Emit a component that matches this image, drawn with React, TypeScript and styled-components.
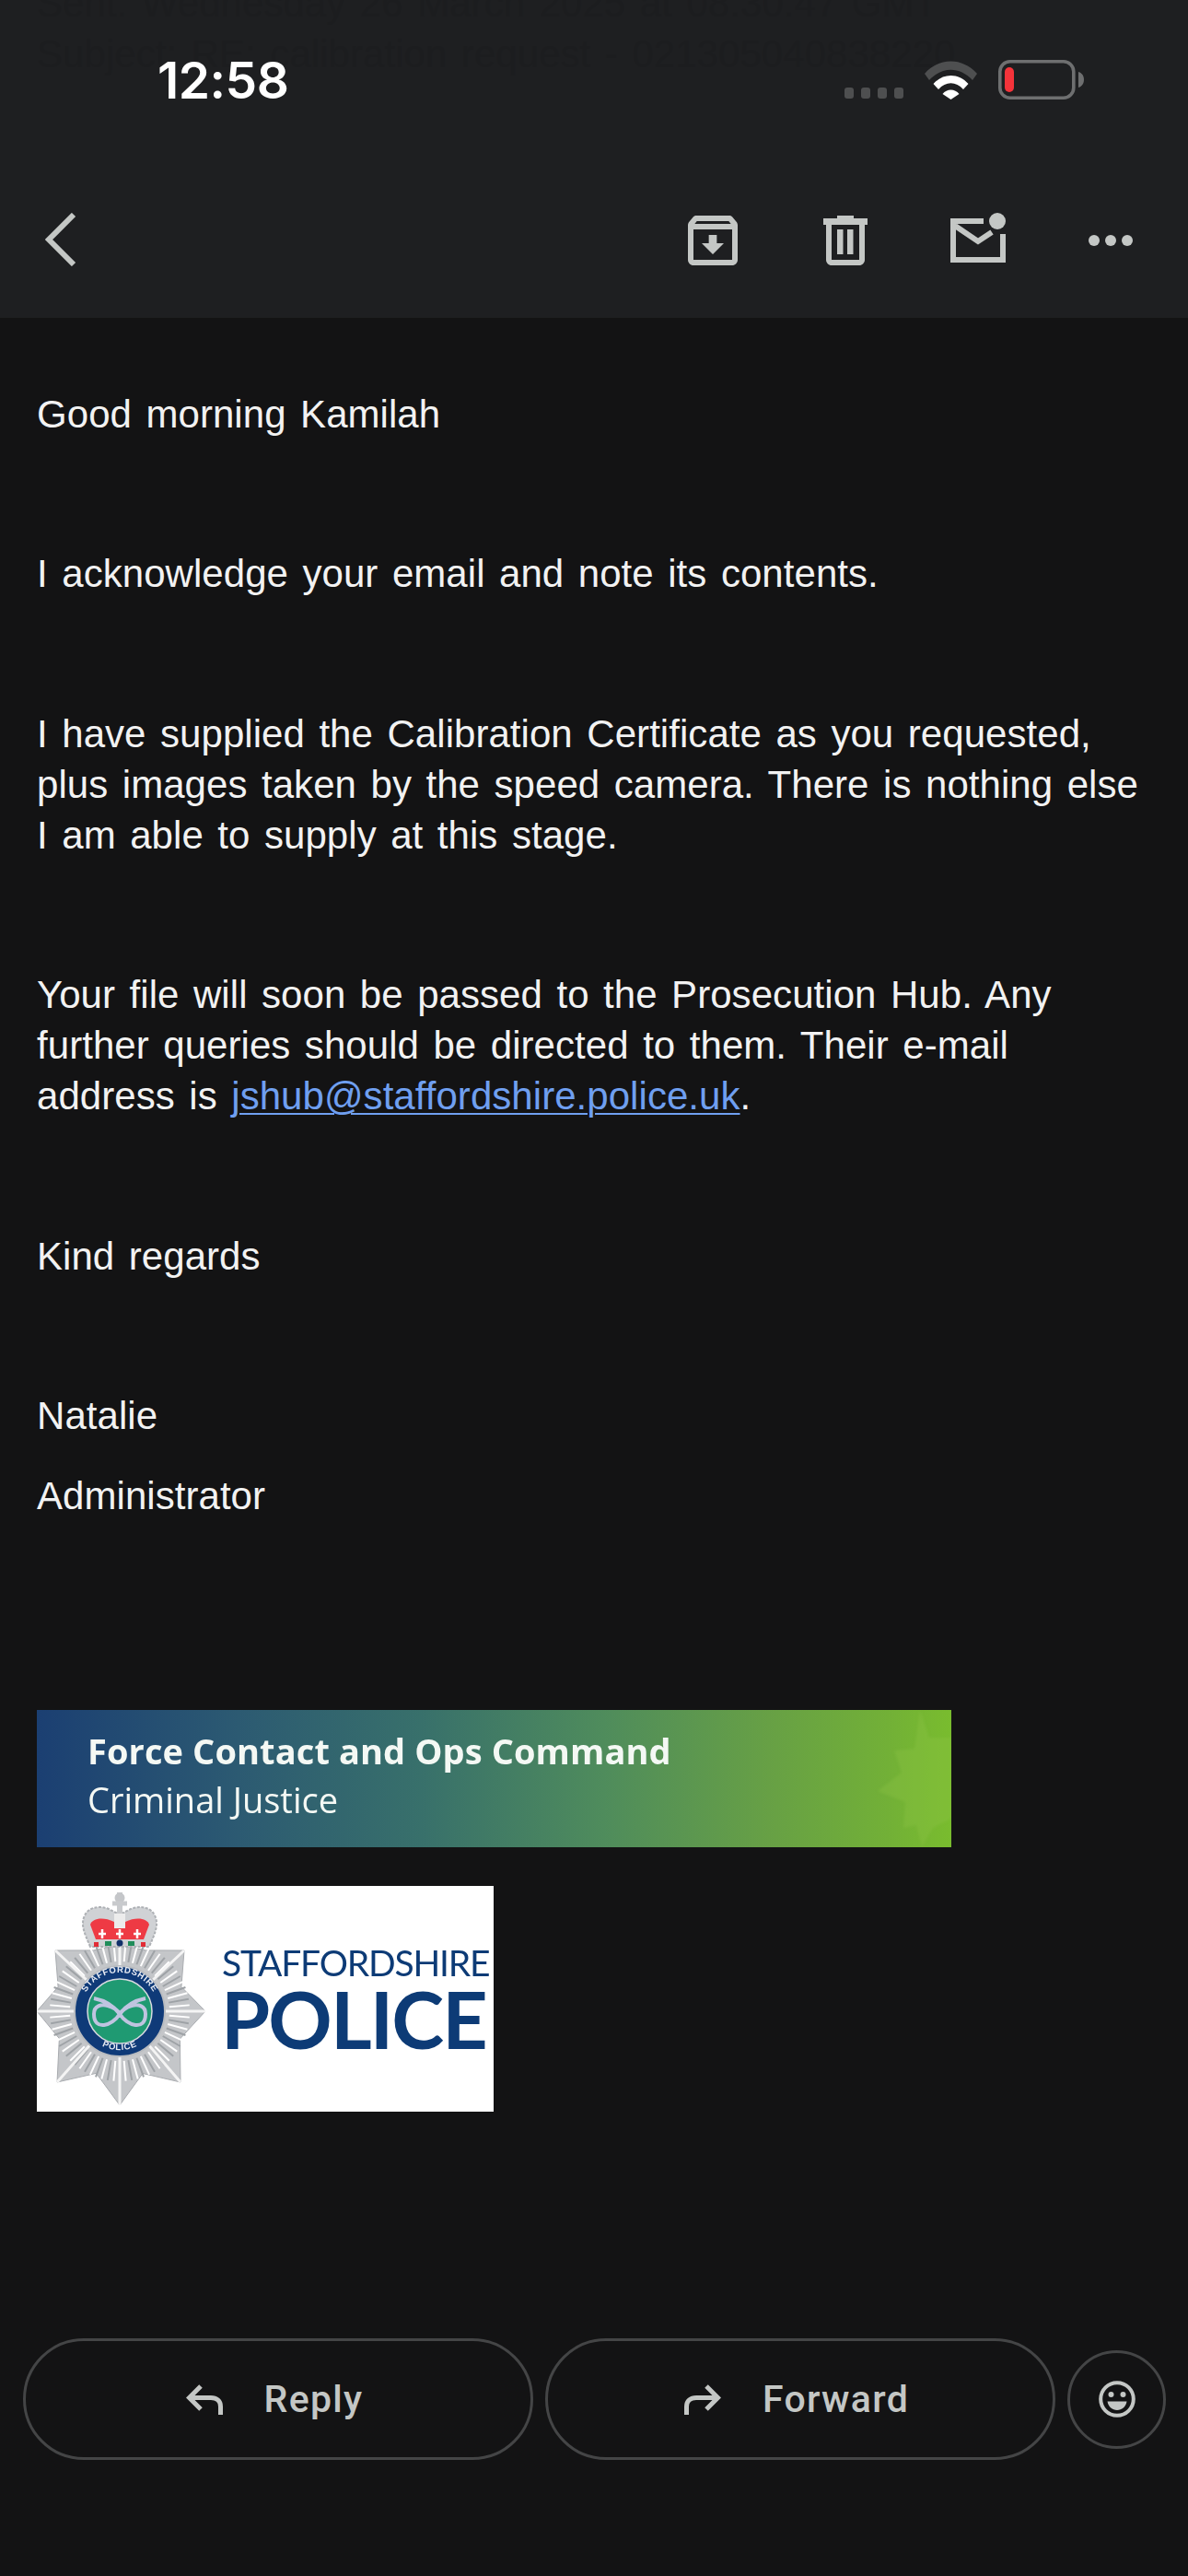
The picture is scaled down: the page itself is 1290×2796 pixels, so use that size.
import React from "react";
import styled, { createGlobalStyle } from "styled-components";

const Global = createGlobalStyle`
  html, body { margin: 0; padding: 0; background: #131314; }
`;

const ICON = "#c4c7c5";

const Page = styled.div`
  width: 1290px;
  height: 2796px;
  background: #131314;
  display: flex;
  flex-direction: column;
  overflow: hidden;
  font-family: "Liberation Sans", Arial, sans-serif;
`;

const Header = styled.header`
  position: relative;
  height: 345px;
  flex: none;
  background: #1e1f21;
  overflow: hidden;
  display: flex;
  flex-direction: column;
`;

const GhostText = styled.div`
  position: absolute;
  left: 40px;
  top: -24px;
  font-size: 42px;
  line-height: 55px;
  word-spacing: 3.8px;
  letter-spacing: 0.05px;
  color: #1c1d1f;
  white-space: nowrap;
`;

const StatusBar = styled.div`
  position: relative;
  display: flex;
  align-items: flex-end;
  height: 108px;
  padding: 0 113px 0 171px;
`;

const Time = styled.div`
  font-family: Inter, "Liberation Sans", sans-serif;
  font-size: 55px;
  line-height: 39px;
  font-weight: 600;
  color: #fff;
  letter-spacing: -0.5px;
  margin-bottom: 1px;
`;

const StatusIcons = styled.div`
  margin-left: auto;
  display: flex;
  align-items: flex-end;
`;

const SignalDots = styled.div`
  display: flex;
  gap: 7.5px;
  margin-right: 23px;
  margin-bottom: 1px;
`;

const SignalDot = styled.span`
  width: 10.5px;
  height: 12px;
  border-radius: 3px;
  background: #4e4f50;
`;

const WifiIcon = styled.svg`
  width: 57px;
  height: 42px;
  margin-right: 23px;
  display: block;
`;

const Battery = styled.svg`
  width: 93px;
  height: 43px;
  display: block;
`;

const Toolbar = styled.div`
  position: relative;
  flex: 1;
  display: flex;
  align-items: flex-start;
  padding: 123px 60px 0 49px;
`;

const BackIcon = styled.svg`
  width: 34px;
  height: 58px;
  margin-right: auto;
  display: block;
`;

const ActionIcons = styled.div`
  display: flex;
  align-items: flex-start;
`;

const ArchiveIcon = styled.svg`
  width: 54px;
  height: 54px;
  margin-top: 3px;
  margin-right: 93px;
  display: block;
`;

const TrashIcon = styled.svg`
  width: 48px;
  height: 54px;
  margin-top: 3px;
  margin-right: 90px;
  display: block;
`;

const MailIcon = styled.svg`
  width: 60px;
  height: 54px;
  margin-right: 90px;
  display: block;
`;

const MoreIcon = styled.svg`
  width: 48px;
  height: 12px;
  margin-top: 24px;
  display: block;
`;

const Body = styled.main`
  flex: 1;
  display: flex;
  flex-direction: column;
  padding: 77px 0 0 40px;
`;

const Para = styled.p<{ $after?: number }>`
  margin: 0 0 ${(p) => p.$after ?? 118.4}px;
  font-size: 42px;
  line-height: 55px;
  word-spacing: 3.8px;
  letter-spacing: 0.05px;
  color: #f2f2f2;
  white-space: nowrap;
`;

const MailLink = styled.a`
  color: #6f9ff0;
  text-decoration: underline;
  text-underline-offset: 4px;
  text-decoration-thickness: 2px;
`;

const Banner = styled.div`
  position: relative;
  width: 993px;
  height: 149px;
  margin-top: 87px;
  box-sizing: border-box;
  padding: 20px 0 0 55px;
  overflow: hidden;
  background: linear-gradient(90deg, #1b3f72 0%, #2c5a72 22%, #38706b 42%, #4f8c5c 62%, #67a045 80%, #72b037 93%, #79bc2e 100%);
  font-family: "Open Sans", sans-serif;
  color: #f4f8f4;
`;

const BannerTitle = styled.div`
  font-size: 38px;
  line-height: 49px;
  font-weight: 700;
  letter-spacing: 0.1px;
  filter: blur(0.5px);
  white-space: nowrap;
`;

const BannerSub = styled.div`
  font-size: 38px;
  line-height: 49px;
  margin-top: 4px;
  font-weight: 400;
  filter: blur(0.5px);
  white-space: nowrap;
`;

const BannerStar = styled.svg`
  position: absolute;
  right: 0;
  top: 0;
  width: 80px;
  height: 149px;
  filter: blur(1.5px);
`;

const Logo = styled.div`
  width: 496px;
  height: 245px;
  margin-top: 42px;
  background: #fff;
  display: flex;
  flex-direction: row;
  overflow: hidden;
`;

const Crest = styled.svg`
  width: 190px;
  height: 245px;
  flex: none;
  display: block;
  filter: blur(0.6px);
`;

const LogoWords = styled.div`
  margin-left: 11px;
  padding-top: 63px;
  display: flex;
  flex-direction: column;
  font-family: Lato, sans-serif;
  color: #0d3b76;
  white-space: nowrap;
  filter: blur(0.5px);
`;

const LogoTop = styled.div`
  font-size: 39px;
  line-height: 40px;
  font-weight: 400;
  letter-spacing: -1.2px;
`;

const LogoBottom = styled.div`
  font-size: 86px;
  line-height: 90px;
  font-weight: 700;
  margin-top: -4px;
  margin-left: -1px;
  letter-spacing: -1.9px;
`;

const ActionBar = styled.div`
  margin-top: 246px;
  margin-left: -15px;
  display: flex;
  align-items: center;
  gap: 13px;
`;

const PillButton = styled.button`
  width: 554px;
  height: 132px;
  box-sizing: border-box;
  border: 3px solid #444546;
  border-radius: 66px;
  background: transparent;
  display: flex;
  align-items: center;
  justify-content: center;
  gap: 45px;
  padding: 0 8px 0 0;
  color: ${ICON};
  font-family: Roboto, sans-serif;
  font-size: 41px;
  font-weight: 500;
  letter-spacing: 1.3px;
`;

const ArrowIcon = styled.svg`
  width: 40px;
  height: 34px;
  display: block;
`;

const EmojiButton = styled.button`
  width: 107px;
  height: 107px;
  box-sizing: border-box;
  border: 3px solid #444546;
  border-radius: 50%;
  background: transparent;
  padding: 0;
  display: flex;
  align-items: center;
  justify-content: center;
`;

const EmojiIcon = styled.svg`
  width: 40px;
  height: 40px;
  display: block;
`;

const starPoints = (cx: number, cy: number, tips: [number, number][], inner: number) => {
  const out: string[] = [];
  tips.forEach((t, i) => {
    const n = tips[(i + 1) % tips.length];
    out.push(`${t[0]},${t[1]}`);
    const a1 = Math.atan2(t[1] - cy, t[0] - cx);
    let a2 = Math.atan2(n[1] - cy, n[0] - cx);
    if (a2 < a1) a2 += Math.PI * 2;
    const a = (a1 + a2) / 2;
    out.push(`${cx + Math.cos(a) * inner},${cy + Math.sin(a) * inner}`);
  });
  return out.join(" ");
};

const CX = 90;
const CY = 136;
const tips: [number, number][] = [
  [183, 136],
  [156, 213],
  [90, 238],
  [22, 213],
  [0, 136],
  [20, 70],
  [90, 64],
  [160, 70],
];

const rays = Array.from({ length: 72 }, (_, i) => (i * Math.PI * 2) / 72);

const CrestArt = () => (
  <Crest viewBox="0 0 190 245" aria-hidden="true">
    <polygon points={starPoints(CX, CY, tips, 72)} fill="#c4c6c9" stroke="#a8abaf" strokeWidth="1" />
    {rays.map((a, i) => (
      <line
        key={i}
        x1={CX + Math.cos(a) * 54}
        y1={CY + Math.sin(a) * 54}
        x2={CX + Math.cos(a) * 76}
        y2={CY + Math.sin(a) * 76}
        stroke={i % 2 ? "#ffffff" : "#9ea2a6"}
        strokeWidth="2"
      />
    ))}
    {tips.map((t, i) => (
      <line key={i} x1={CX} y1={CY} x2={t[0]} y2={t[1]} stroke="#f4f4f4" strokeWidth="3" />
    ))}
    <circle cx={CX} cy={CY} r="49" fill="#0f3a78" stroke="#b9bcc0" strokeWidth="2" />
    <circle cx={CX} cy={CY} r="35" fill="#1f9a72" stroke="#d8dbe0" strokeWidth="1.5" />
    <defs>
      <path id="ringTop" d="M48 136 A42 42 0 0 1 132 136" />
      <path id="ringBottom" d="M50 150 A42.5 42.5 0 0 0 130 150" />
    </defs>
    <text fontFamily="Liberation Sans, sans-serif" fontSize="9.5" fontWeight="700" fill="#e8ecf4" letterSpacing="0.7">
      <textPath href="#ringTop" startOffset="50%" textAnchor="middle">STAFFORDSHIRE</textPath>
    </text>
    <text fontFamily="Liberation Sans, sans-serif" fontSize="9.5" fontWeight="700" fill="#e8ecf4" letterSpacing="0.7">
      <textPath href="#ringBottom" startOffset="50%" textAnchor="middle">POLICE</textPath>
    </text>
    <path
      d="M62 122 C72 124 82 128 90 139 C98 152 118 158 118 139 C118 130 110 128 103 130 C96 132 92 136 90 139 C82 152 62 158 62 139 C62 130 70 128 77 130 C84 132 88 135 90 139 M118 122 C108 124 98 128 90 139"
      fill="none"
      stroke="#bfc4e0"
      strokeWidth="4"
    />
    <path
      d="M58 66 C52 52 47 42 52 32 C56 23 68 21 78 25 C82 27 86 29 90 31 C94 29 98 27 102 25 C112 21 124 23 128 32 C133 42 128 52 122 66 Z"
      fill="#d0d2d5"
      stroke="#aeb1b5"
      strokeWidth="2"
      strokeDasharray="3 1.500"
    />
    <path d="M90 7 L90 36" stroke="#c8cacd" strokeWidth="6" />
    <circle cx="90" cy="13" r="5.500" fill="#c4c6c9" />
    <path d="M82 19 H98" stroke="#c8cacd" strokeWidth="5" />
    <path d="M58 42 C60 35 72 33 84 39 L84 58 L64 58 Z" fill="#ee3a44" />
    <path d="M122 42 C120 35 108 33 96 39 L96 58 L116 58 Z" fill="#ee3a44" />
    <rect x="84" y="46" width="12" height="12" fill="#ee3a44" />
    <rect x="84" y="30" width="12" height="16" fill="#ececec" />
    <path d="M71 57 v-10 M67 52 h8 M90 57 v-10 M86 52 h8 M109 57 v-10 M105 52 h8" stroke="#fff" strokeWidth="2.500" fill="none" />
    <rect x="62" y="61" width="5" height="5" fill="#e22c36" />
    <rect x="74" y="60" width="7" height="5" fill="#1f8d5a" />
    <circle cx="90" cy="62" r="3.500" fill="#12306a" />
    <rect x="99" y="60" width="7" height="5" fill="#1f8d5a" />
    <rect x="113" y="61" width="5" height="5" fill="#e22c36" />
  </Crest>
);

export default function App() {
  return (
    <Page>
      <Global />
      <Header>
        <GhostText>
          Sent: Wednesday 26 March 2025 at 08:30:47 GMT
          <br />
          Subject: RE: calibration request - 021305040838220
        </GhostText>
        <StatusBar>
          <Time>12:58</Time>
          <StatusIcons>
            <SignalDots>
              <SignalDot />
              <SignalDot />
              <SignalDot />
              <SignalDot />
            </SignalDots>
            <WifiIcon viewBox="0 0 57 42" aria-hidden="true">
              <path d="M0 14 C16 -4 41 -4 57 14 L52 21 C38 6 19 6 5 21 Z" fill="#4e4f50" />
              <path d="M9.500 25 C20 13 37 13 47.500 25 L42 31 C34 22 23 22 15 31 Z" fill="#fff" />
              <path d="M19.500 36 C24 30 33 30 37.500 36 L28.500 42 Z" fill="#fff" />
            </WifiIcon>
            <Battery viewBox="0 0 93 43" aria-hidden="true">
              <rect x="1.800" y="1.800" width="80" height="39.400" rx="11" fill="none" stroke="#6e6f70" strokeWidth="3.600" />
              <rect x="7" y="8" width="10" height="27" rx="5" fill="#f5333a" />
              <path d="M87 13 C91 14 93 18 93 21.500 C93 25 91 29 87 30 Z" fill="#6e6f70" />
            </Battery>
          </StatusIcons>
        </StatusBar>
        <Toolbar>
          <BackIcon viewBox="0 0 34 58" aria-hidden="true">
            <path d="M31 2 L4 29 L31 56" fill="none" stroke={ICON} strokeWidth="6" />
          </BackIcon>
          <ActionIcons>
            <ArchiveIcon viewBox="3 3 18 18" aria-hidden="true">
              <path
                fill={ICON}
                d="M20.54 5.23l-1.39-1.68C18.88 3.21 18.47 3 18 3H6c-.47 0-.88.21-1.16.55L3.46 5.23C3.17 5.57 3 6.02 3 6.5V19c0 1.1.9 2 2 2h14c1.1 0 2-.9 2-2V6.5c0-.48-.17-.93-.46-1.27zM6.24 5h11.52l.81.97H5.44l.8-.97zM5 19V8h14v11H5zm8.45-9h-2.9v3H8l4 4 4-4h-2.55z"
              />
            </ArchiveIcon>
            <TrashIcon viewBox="0 0 48 54" aria-hidden="true">
              <path
                fill={ICON}
                fillRule="evenodd"
                d="M15 0h18v3h15v7H0V3h15zM3 10h42v38c0 3.3-2.7 6-6 6H9c-3.3 0-6-2.7-6-6zM9 10v38h30V10zM15 15h6.500v27H15zM26 15h6.500v27H26z"
              />
            </TrashIcon>
            <MailIcon viewBox="0 0 60 54" aria-hidden="true">
              <path d="M36 9 H3 V51 H57 V23" fill="none" stroke={ICON} strokeWidth="6" />
              <path d="M5 14 L30 31 L45 21" fill="none" stroke={ICON} strokeWidth="6" />
              <circle cx="51" cy="9" r="9" fill={ICON} />
            </MailIcon>
            <MoreIcon viewBox="0 0 48 12" aria-hidden="true">
              <circle cx="6" cy="6" r="6" fill={ICON} />
              <circle cx="24" cy="6" r="6" fill={ICON} />
              <circle cx="42" cy="6" r="6" fill={ICON} />
            </MoreIcon>
          </ActionIcons>
        </Toolbar>
      </Header>
      <Body>
        <Para>Good morning Kamilah</Para>
        <Para>I acknowledge your email and note its contents.</Para>
        <Para>
          I have supplied the Calibration Certificate as you requested,
          <br />
          plus images taken by the speed camera. There is nothing else
          <br />I am able to supply at this stage.
        </Para>
        <Para>
          Your file will soon be passed to the Prosecution Hub. Any
          <br />
          further queries should be directed to them. Their e-mail
          <br />
          address is <MailLink href="#">jshub@staffordshire.police.uk</MailLink>.
        </Para>
        <Para>Kind regards</Para>
        <Para $after={32}>Natalie</Para>
        <Para>Administrator</Para>
        <Banner>
          <BannerTitle>Force Contact and Ops Command</BannerTitle>
          <BannerSub>Criminal Justice</BannerSub>
          <BannerStar viewBox="0 0 80 149" aria-hidden="true">
            <polygon
              points="46,0 56,30 80,30 80,118 60,128 48,149 42,125 28,128 30,100 0,88 26,68 18,44 40,42"
              fill="#8cc444"
              opacity="0.35"
            />
          </BannerStar>
        </Banner>
        <Logo>
          <CrestArt />
          <LogoWords>
            <LogoTop>STAFFORDSHIRE</LogoTop>
            <LogoBottom>POLICE</LogoBottom>
          </LogoWords>
        </Logo>
        <ActionBar>
          <PillButton>
            <ArrowIcon viewBox="0 0 40 34" aria-hidden="true">
              <path d="M16 3 L3.500 15.500 L16 28 M3.500 15.500 H27 C33 15.500 37.500 19 37.500 25 V34" fill="none" stroke={ICON} strokeWidth="5" />
            </ArrowIcon>
            Reply
          </PillButton>
          <PillButton>
            <ArrowIcon viewBox="0 0 40 34" aria-hidden="true">
              <path d="M24 3 L36.500 15.500 L24 28 M36.500 15.500 H13 C7 15.500 2.500 19 2.500 25 V34" fill="none" stroke={ICON} strokeWidth="5" />
            </ArrowIcon>
            Forward
          </PillButton>
          <EmojiButton>
            <EmojiIcon viewBox="0 0 40 40" aria-hidden="true">
              <circle cx="20" cy="20" r="17.800" fill="none" stroke={ICON} strokeWidth="4" />
              <circle cx="13.500" cy="15" r="3" fill={ICON} />
              <circle cx="26.500" cy="15" r="3" fill={ICON} />
              <path d="M9.500 22.500 H30.500 C29.500 28.500 25 32 20 32 C15 32 10.500 28.500 9.500 22.500 Z" fill={ICON} />
            </EmojiIcon>
          </EmojiButton>
        </ActionBar>
      </Body>
    </Page>
  );
}
